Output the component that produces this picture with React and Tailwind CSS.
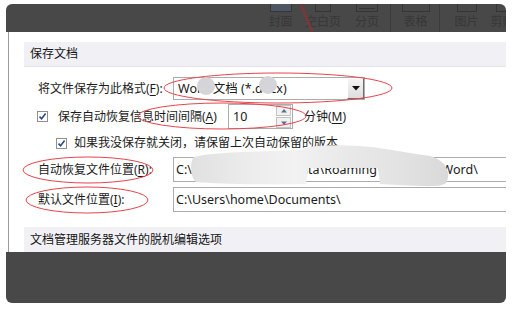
import React from "react";

function Check() {
  return (
    <span className="w-[11px] h-[11px] border border-[#8e8f8f] bg-white flex items-center justify-center shrink-0">
      <svg width="9" height="9" viewBox="0 0 9 9">
        <path d="M1.5 4.6 L3.6 6.8 L7.6 1.6" fill="none" stroke="#2b4b8e" strokeWidth="1.6" />
      </svg>
    </span>
  );
}

function U({ children }) {
  return <span className="underline underline-offset-2">{children}</span>;
}

function RibbonItem({ label, w, iconW, iconClass = "", children }) {
  return (
    <div className="flex flex-col items-center shrink-0" style={{ width: w }}>
      <div className={"h-[8px] border-x border-b border-[#353535] " + iconClass} style={{ width: iconW }}>
        {children}
      </div>
      <div className="mt-[4px] leading-[12px] text-[12px] whitespace-nowrap">{label}</div>
    </div>
  );
}

export default function App() {
  return (
    <div className="relative w-[516px] h-[311px] bg-white overflow-hidden font-['Noto_Sans','Noto_Sans_CJK_SC',sans-serif] text-[12px] leading-[16px] text-[#1b1b1b]">
      <div className="ml-[6px] mt-[4px] w-[500px] h-[299px] rounded-[6px] bg-[#484848] overflow-hidden flex flex-col">
        {/* dimmed ribbon */}
        <div className="h-[28px] shrink-0 flex items-start text-[#373737] pl-[262px]">
          <RibbonItem label="封面" w={25} iconW={22} iconClass="bg-[#4f5663]" />
          <div className="w-[12px] shrink-0" />
          <RibbonItem label="空白页" w={36} iconW={16} />
          <div className="w-[14px] shrink-0" />
          <RibbonItem label="分页" w={24} iconW={22}>
            <div className="mt-[4px] h-px bg-[#353535] mx-[2px]" />
          </RibbonItem>
          <div className="w-[11px] shrink-0" />
          <div className="w-px h-[28px] bg-[#3c3c3c] shrink-0" />
          <div className="w-[12px] shrink-0" />
          <RibbonItem label="表格" w={25} iconW={28} />
          <div className="w-[11px] shrink-0" />
          <div className="w-px h-[28px] bg-[#3c3c3c] shrink-0" />
          <div className="w-[14px] shrink-0" />
          <RibbonItem label="图片" w={25} iconW={20} />
          <div className="w-[11px] shrink-0" />
          <RibbonItem label="剪贴" w={25} iconW={14} />
        </div>

        {/* dialog content */}
        <div className="h-[220px] shrink-0 bg-white flex">
          <div className="w-[2px] shrink-0" />
          <div className="w-px bg-[#9d9d9d] shrink-0" />
          <div className="flex-1 min-w-0 pl-[15px] pt-[10px] flex flex-col">
            <div className="h-[25px] shrink-0 bg-[#f0f0f5] border-b border-[#e3e3ea] flex items-center px-[6px] text-[12px] text-[#151515]">
              保存文档
            </div>

            <div className="pl-[14px] flex flex-col">
              {/* row 1 */}
              <div className="mt-[10px] h-[23px] flex items-center">
                <div className="w-[135px] shrink-0 whitespace-nowrap">
                  将文件保存为此格式(<U>F</U>):
                </div>
                <div className="w-[192px] h-[23px] border border-[#acacac] bg-white flex items-center">
                  <div className="flex-1 pl-[4px] text-[12.5px] whitespace-nowrap">Word 文档 (*.docx)</div>
                  <div className="w-[17px] h-[21px] bg-gradient-to-b from-[#f4f4f4] to-[#dedede] border-l border-t border-[#ffffff] border-r border-b border-r-[#6d6d6d] border-b-[#6d6d6d] flex items-center justify-center">
                    <svg width="8" height="5" viewBox="0 0 8 5">
                      <path d="M0 0 H8 L4 4.5 Z" fill="#111" />
                    </svg>
                  </div>
                </div>
              </div>

              {/* row 2 */}
              <div className="mt-[4px] h-[25px] flex items-center">
                <div className="-ml-[1px]">
                  <Check />
                </div>
                <div className="ml-[10px] w-[170px] shrink-0 whitespace-nowrap">
                  保存自动恢复信息时间间隔(<U>A</U>)
                </div>
                <div className="w-[65px] h-[25px] border border-[#acacac] bg-white flex items-center">
                  <div className="flex-1 pl-[4px] text-[12.5px]">10</div>
                  <div className="w-[15px] h-[23px] mr-[1px] flex flex-col gap-[1px]">
                    <div className="flex-1 bg-[#f1f1f1] border border-[#c3c3c3] flex items-center justify-center">
                      <svg width="6" height="4" viewBox="0 0 6 4">
                        <path d="M0 3.5 L3 0 L6 3.5 Z" fill="#5b6e9b" />
                      </svg>
                    </div>
                    <div className="flex-1 bg-[#f1f1f1] border border-[#c3c3c3] flex items-center justify-center">
                      <svg width="6" height="4" viewBox="0 0 6 4">
                        <path d="M0 0.5 L3 4 L6 0.5 Z" fill="#5b6e9b" />
                      </svg>
                    </div>
                  </div>
                </div>
                <div className="ml-[11px] whitespace-nowrap">
                  分钟(<U>M</U>)
                </div>
              </div>

              {/* row 3 */}
              <div className="mt-[2px] h-[24px] flex items-center">
                <div className="ml-[18px]">
                  <Check />
                </div>
                <div className="ml-[7px] whitespace-nowrap">如果我没保存就关闭，请保留上次自动保留的版本</div>
              </div>

              {/* row 4 */}
              <div className="mt-[2px] h-[25px] flex items-center">
                <div className="w-[135px] shrink-0 whitespace-nowrap">
                  自动恢复文件位置(<U>R</U>):
                </div>
                <div className="flex-1 -mr-[4px] h-[25px] border border-[#acacac] bg-white flex items-center pl-[2px] text-[12.5px] whitespace-nowrap overflow-hidden">
                  C:\Users\home\AppData\Roaming\Microsoft\Word\
                </div>
              </div>

              {/* row 5 */}
              <div className="mt-[5px] h-[25px] flex items-center">
                <div className="w-[135px] shrink-0 whitespace-nowrap">
                  默认文件位置(<U>I</U>):
                </div>
                <div className="flex-1 -mr-[4px] h-[25px] border border-[#acacac] bg-white flex items-center pl-[2px] text-[12.5px] whitespace-nowrap overflow-hidden">
                  C:\Users\home\Documents\
                </div>
              </div>
            </div>

            <div className="mt-[15px] h-[25px] shrink-0 bg-[#f0f0f5] flex items-center px-[6px] text-[12px] text-[#151515]">
              文档管理服务器文件的脱机编辑选项
            </div>
          </div>
        </div>

        <div className="flex-1" />
      </div>

      {/* annotations overlay */}
      <svg className="absolute inset-0 pointer-events-none" width="516" height="311" viewBox="0 0 516 311">
        <defs>
          <linearGradient id="smear" x1="0" x2="1" y1="0" y2="0">
            <stop offset="0" stopColor="#e0e0e0" />
            <stop offset="0.2" stopColor="#ebebeb" />
            <stop offset="0.4" stopColor="#f2f2f2" />
            <stop offset="0.6" stopColor="#e9e9e9" />
            <stop offset="0.8" stopColor="#e3e3e3" />
            <stop offset="1" stopColor="#d9d9d9" />
          </linearGradient>
          <clipPath id="rib">
            <rect x="0" y="4" width="516" height="28" />
          </clipPath>
        </defs>
        {/* dimmed red stroke in ribbon */}
        <line x1="300" y1="2" x2="313" y2="34" stroke="#743a3a" strokeWidth="3" clipPath="url(#rib)" />
        {/* blur circles in select */}
        <circle cx="206" cy="86" r="9" fill="#d5d5d9" />
        <circle cx="268" cy="85" r="9" fill="#d5d5d9" />
        {/* smear over path */}
        <path
          d="M193 158 C200 153 240 152 300 150 C305 146 330 144 360 146 C385 148 400 152 430 156 C445 160 452 172 446 183 C440 188 420 186 380 184 L378 168 L308 168 L306 184 C270 185 220 184 196 182 C190 176 190 164 193 158 Z"
          fill="url(#smear)"
        />
        {/* red ellipses */}
        <ellipse cx="278" cy="88" rx="114" ry="15" fill="none" stroke="#e8444c" strokeWidth="1" />
        <ellipse cx="222" cy="116" rx="84" ry="13" fill="none" stroke="#e8444c" strokeWidth="1" />
        <ellipse cx="88" cy="170" rx="65" ry="13" fill="none" stroke="#e8444c" strokeWidth="1" />
        <ellipse cx="87" cy="200" rx="61" ry="13" fill="none" stroke="#e8444c" strokeWidth="1" />
      </svg>
    </div>
  );
}
